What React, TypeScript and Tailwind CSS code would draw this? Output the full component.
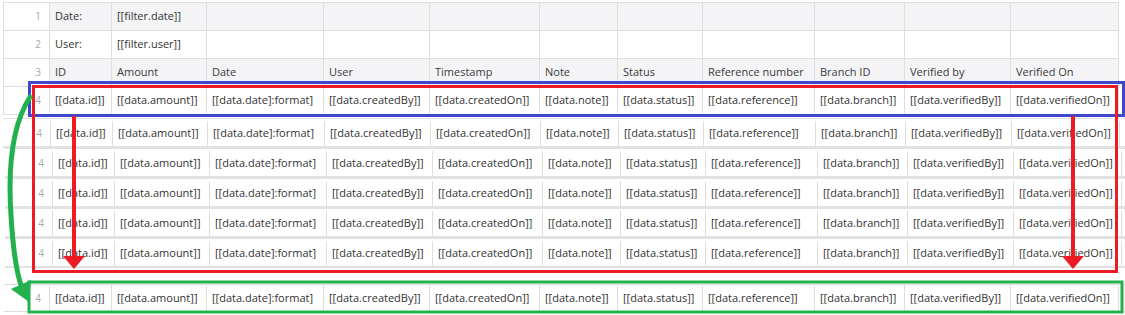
import React from 'react';

const widths = [62, 95, 117, 106, 110, 78, 85, 112, 90, 106, 109];

const headers = [
  'ID',
  'Amount',
  'Date',
  'User',
  'Timestamp',
  'Note',
  'Status',
  'Reference number',
  'Branch ID',
  'Verified by',
  'Verified On',
];

const fields = [
  '[[data.id]]',
  '[[data.amount]]',
  '[[data.date]:format]',
  '[[data.createdBy]]',
  '[[data.createdOn]]',
  '[[data.note]]',
  '[[data.status]]',
  '[[data.reference]]',
  '[[data.branch]]',
  '[[data.verifiedBy]]',
  '[[data.verifiedOn]]',
];

const Cell: React.FC<{ w: number; text?: string; last?: boolean }> = ({ w, text, last }) => (
  <div
    className={`flex h-full shrink-0 items-center overflow-hidden whitespace-nowrap border-l border-[#dedede] px-[5px] ${
      last ? 'border-r' : ''
    }`}
    style={{ width: w }}
  >
    {text}
  </div>
);

const RowNum: React.FC<{ n: number | string; w: number }> = ({ n, w }) => (
  <div
    className="flex h-full shrink-0 items-center justify-end pr-[8px] text-[10px] text-[#a8a8a8]"
    style={{ width: w }}
  >
    {n}
  </div>
);

const Annotations = () => (
  <svg
    className="pointer-events-none absolute left-0 top-0"
    width={1125}
    height={315}
    viewBox="0 0 1125 315"
  >
    {/* blue box: template row */}
    <rect x={29.5} y={82.5} width={1094} height={33} fill="none" stroke="#3f48cc" strokeWidth={3} />
    {/* red box: repeated rows */}
    <rect x={33.5} y={86.5} width={1083} height={185} fill="none" stroke="#ed1c24" strokeWidth={3} />
    {/* green box: last row */}
    <rect x={29} y={282} width={1093} height={30} fill="none" stroke="#22b14c" strokeWidth={3} />

    {/* red arrows */}
    <line x1={74} y1={116} x2={74} y2={258} stroke="#ed1c24" strokeWidth={4} />
    <polygon points="63,256 85,256 74,269" fill="#ed1c24" />
    <line x1={1073} y1={116} x2={1073} y2={258} stroke="#ed1c24" strokeWidth={4} />
    <polygon points="1062,256 1084,256 1073,269" fill="#ed1c24" />

    {/* green curved arrow */}
    <path
      d="M30 97 C 12 125, 8 170, 11 215 C 13 250, 16 272, 22 288"
      fill="none"
      stroke="#22b14c"
      strokeWidth={5}
      strokeLinecap="round"
    />
    <polygon points="11,289 31,280 29,302" fill="#22b14c" />
  </svg>
);

export default function App() {
  return (
    <div
      className="relative h-[315px] w-[1125px] overflow-hidden bg-white text-[11px] text-[#333]"
      style={{ fontFamily: '"Open Sans", "Noto Sans", Arial, sans-serif' }}
    >
      <div className="pl-[3px] pt-[2px]">
        {/* main sheet */}
        <div className="w-[1116px] border-l border-t border-[#dedede]">
          <div className="flex h-[28px] border-b border-[#dedede] bg-white">
            <RowNum n={1} w={45} />
            <div className="flex h-full bg-[#f4f4f6]">
              {widths.map((w, i) => (
                <Cell key={i} w={w} text={i === 0 ? 'Date:' : i === 1 ? '[[filter.date]]' : ''} last={i === widths.length - 1} />
              ))}
            </div>
          </div>
          <div className="flex h-[28px] border-b border-[#dedede] bg-white">
            <RowNum n={2} w={45} />
            <div className="flex h-full">
              {widths.map((w, i) => (
                <Cell key={i} w={w} text={i === 0 ? 'User:' : i === 1 ? '[[filter.user]]' : ''} last={i === widths.length - 1} />
              ))}
            </div>
          </div>
          <div className="flex h-[28px] border-b border-[#dedede] bg-white">
            <RowNum n={3} w={45} />
            <div className="flex h-full bg-[#f4f4f6] text-[#3a3a3a]">
              {widths.map((w, i) => (
                <Cell key={i} w={w} text={headers[i]} last={i === widths.length - 1} />
              ))}
            </div>
          </div>
          <div className="flex h-[28px] border-b border-[#dedede] bg-white">
            <RowNum n={4} w={45} />
            <div className="flex h-full">
              {widths.map((w, i) => (
                <Cell key={i} w={w} text={fields[i]} last={i === widths.length - 1} />
              ))}
            </div>
          </div>
        </div>

        {/* repeated copies */}
        <div className="mt-[3px] flex flex-col">
          {[0, 1, 2, 3, 4].map((k) => (
            <div
              key={k}
              className="flex h-[30px] border-b-2 border-t border-[#e2e2e2] pt-[2px]"
              style={{ marginLeft: k === 0 ? 0 : 2 }}
            >
              <RowNum n={4} w={47} />
              <div className="flex h-full">
                {widths.map((w, i) => (
                  <Cell key={i} w={w} text={fields[i]} last={i === widths.length - 1} />
                ))}
              </div>
            </div>
          ))}
        </div>

        {/* final row */}
        <div className="ml-[1px] mt-[16px] flex h-[28px] border-b border-t border-[#dedede]">
          <RowNum n={4} w={45} />
          <div className="flex h-full">
            {widths.map((w, i) => (
              <Cell key={i} w={w} text={fields[i]} last={i === widths.length - 1} />
            ))}
          </div>
        </div>
      </div>

      <Annotations />
    </div>
  );
}
